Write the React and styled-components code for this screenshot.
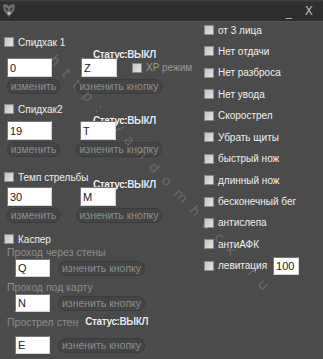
import styled, { createGlobalStyle } from "styled-components";

const GlobalStyle = createGlobalStyle`
  html, body {
    margin: 0;
    padding: 0;
    background: #4b4b4b;
  }
  * {
    box-sizing: border-box;
  }
`;

// spacing per section is uneven in the original window, so it lives in the data
const speedSections = [
  { title: "Спидхак 1", value: "0", key: "Z", xp: true, top: 12, head: 24, statusTop: 10, keyGap: 29 },
  { title: "Спидхак2", value: "19", key: "T", top: 7, head: 20, statusTop: 9, keyGap: 28 },
  { title: "Темп стрельбы", value: "30", key: "M", top: 12, head: 18, statusTop: 5, keyGap: 28 },
];

const casperItems = [
  { title: "Проход через стены", key: "Q", gap: 1 },
  { title: "Проход под карту", key: "N", gap: 1 },
  { title: "Прострел стен", key: "E", gap: 8, status: true },
];

const options = [
  "от 3 лица",
  "Нет отдачи",
  "Нет разброса",
  "Нет увода",
  "Скорострел",
  "Убрать щиты",
  "быстрый нож",
  "длинный нож",
  "бесконечный бег",
  "антислепа",
  "антиАФК",
];

const Logo = () => (
  <svg width="14" height="15" viewBox="0 0 14 15">
    <path d="M1 2 L4 1 L7 3 L10 1 L13 2 L12 8 L7 14 L2 8 Z" fill="#6e6e6e" />
    <path d="M3 4 L6 6 L5 8 Z M11 4 L8 6 L9 8 Z" fill="#222" />
    <path d="M5 10 L7 12 L9 10 L7 9 Z" fill="#c8c8c8" />
  </svg>
);

const Status = () => (
  <StatusText>
    Статус:<b>ВЫКЛ</b>
  </StatusText>
);

export default function App() {
  return (
    <>
      <GlobalStyle />
      <Window>
        <TitleBar>
          <Logo />
          <TitleButtons>
            <Minimize>_</Minimize>
            <span>X</span>
          </TitleButtons>
        </TitleBar>
        <Body>
          <LeftColumn>
            {speedSections.map((s) => (
              <Section key={s.title} top={s.top}>
                <HeaderRow head={s.head}>
                  <LabelCell>
                    <Check>
                      <Box />
                      {s.title}
                    </Check>
                  </LabelCell>
                  <StatusCell statusTop={s.statusTop}>
                    <Status />
                  </StatusCell>
                </HeaderRow>
                <FieldRow>
                  <TextInput width={45} defaultValue={s.value} />
                  <TextInput width={36} defaultValue={s.key} offset={s.keyGap} />
                  {s.xp && (
                    <Check muted>
                      <Box />
                      XP режим
                    </Check>
                  )}
                </FieldRow>
                <ButtonRow>
                  <Button width={53}>изменить</Button>
                  <Button width={86}>изненить кнопку</Button>
                </ButtonRow>
              </Section>
            ))}
            <Casper>
              <Check>
                <Box />
                Каспер
              </Check>
              {casperItems.map((c) => (
                <CasperItem key={c.title}>
                  <SubLabel>
                    {c.title}
                    {c.status && <Status />}
                  </SubLabel>
                  <CasperRow gap={c.gap}>
                    <TextInput width={35} height={18} defaultValue={c.key} />
                    <Button width={87}>изненить кнопку</Button>
                  </CasperRow>
                </CasperItem>
              ))}
            </Casper>
          </LeftColumn>
          <RightColumn>
            {options.map((o) => (
              <OptionRow key={o}>
                <Check>
                  <Box />
                  {o}
                </Check>
              </OptionRow>
            ))}
            <OptionRow>
              <Check>
                <Box />
                левитация
              </Check>
              <TextInput width={26} height={18} defaultValue="100" offset={6} />
            </OptionRow>
          </RightColumn>
        </Body>
        <Watermark>http://andomhack.ru</Watermark>
      </Window>
    </>
  );
}

const Window = styled.div`
  position: relative;
  width: 323px;
  height: 359px;
  display: flex;
  flex-direction: column;
  background: #4b4b4b;
  font-family: "Liberation Sans", Arial, sans-serif;
  overflow: hidden;
`;

const TitleBar = styled.div`
  height: 22px;
  flex: none;
  display: flex;
  align-items: center;
  justify-content: space-between;
  padding: 0 10px 0 2px;
  background: linear-gradient(#444 0, #303030 2px, #2c2c2c 100%);
  border-bottom: 1px solid #555;
`;

const TitleButtons = styled.div`
  display: flex;
  align-items: center;
  gap: 13px;
  color: #b8b8b8;
  font-size: 12px;
  font-family: "DejaVu Sans", sans-serif;
`;

const Minimize = styled.span`
  margin-top: 2px;
`;

const Body = styled.div`
  flex: 1;
  display: flex;
  padding-left: 4px;
`;

const LeftColumn = styled.div`
  width: 200px;
  display: flex;
  flex-direction: column;
`;

const Section = styled.div`
  display: flex;
  flex-direction: column;
  margin-top: ${(p) => p.top}px;
`;

const HeaderRow = styled.div`
  display: flex;
  align-items: flex-start;
  height: ${(p) => p.head}px;
`;

const LabelCell = styled.div`
  width: 89px;
  flex: none;
`;

const StatusCell = styled.div`
  margin-top: ${(p) => p.statusTop}px;
`;

const StatusText = styled.span`
  font-weight: bold;
  font-size: 10px;
  line-height: 12px;
  color: #f4f4f4;
  letter-spacing: -0.4px;
  text-shadow: 0 0 1px #1e1e1e;
  white-space: nowrap;

  b {
    color: #e4ebf5;
  }
`;

const FieldRow = styled.div`
  display: flex;
  align-items: center;
  padding-left: 3px;
`;

const ButtonRow = styled.div`
  display: flex;
  gap: 16px;
  padding-left: 3px;
  margin-top: 2px;
`;

const Check = styled.label`
  display: flex;
  align-items: center;
  gap: 4px;
  height: 16px;
  font-size: 10px;
  color: ${(p) => (p.muted ? "#9a9a9a" : "#f0f0f0")};
  margin-left: ${(p) => (p.muted ? "15px" : "0")};
  white-space: nowrap;
`;

const Box = styled.span`
  width: 10px;
  height: 10px;
  flex: none;
  border: 1px solid #8a8a8a;
  background: linear-gradient(135deg, #c4c4c4, #e2e2e2);
`;

const TextInput = styled.input`
  width: ${(p) => p.width}px;
  height: ${(p) => p.height || 19}px;
  margin: 0 0 0 ${(p) => p.offset || 0}px;
  padding: 0 2px;
  font-family: "Liberation Sans", Arial, sans-serif;
  font-size: 11px;
  color: #222;
  background: #fff;
  border: 1px solid;
  border-color: #777 #d4d4d4 #d4d4d4 #777;
  outline: none;
`;

const Button = styled.button`
  width: ${(p) => p.width}px;
  height: 15px;
  padding: 0;
  border: 1px solid #3c3c3c;
  border-radius: 7px;
  background: #444;
  color: #8e8e8e;
  font-family: "Liberation Sans", Arial, sans-serif;
  font-size: 10.5px;
  line-height: 13px;
  white-space: nowrap;
`;

const Casper = styled.div`
  display: flex;
  flex-direction: column;
  margin-top: 8px;
`;

const CasperItem = styled.div`
  display: flex;
  flex-direction: column;
`;

const SubLabel = styled.div`
  height: 12px;
  margin-top: -1px;
  display: flex;
  align-items: center;
  gap: 7px;
  padding-left: 3px;
  font-size: 10.5px;
  color: #8c8c8c;
  white-space: nowrap;

  & + div {
    margin-bottom: 5px;
  }
`;

const CasperRow = styled.div`
  display: flex;
  align-items: center;
  gap: 8px;
  padding-left: 11px;
  margin-top: ${(p) => p.gap}px;
`;

const RightColumn = styled.div`
  display: flex;
  flex-direction: column;
  gap: 5.45px;
`;

const OptionRow = styled.div`
  height: 16px;
  display: flex;
  align-items: center;
`;

const Watermark = styled.div`
  position: absolute;
  left: 58px;
  top: 52px;
  transform: rotate(47deg);
  transform-origin: left top;
  font-family: "DejaVu Sans", sans-serif;
  font-size: 14px;
  letter-spacing: 9.5px;
  color: rgba(215, 215, 215, 0.24);
  pointer-events: none;
  white-space: nowrap;
`;
